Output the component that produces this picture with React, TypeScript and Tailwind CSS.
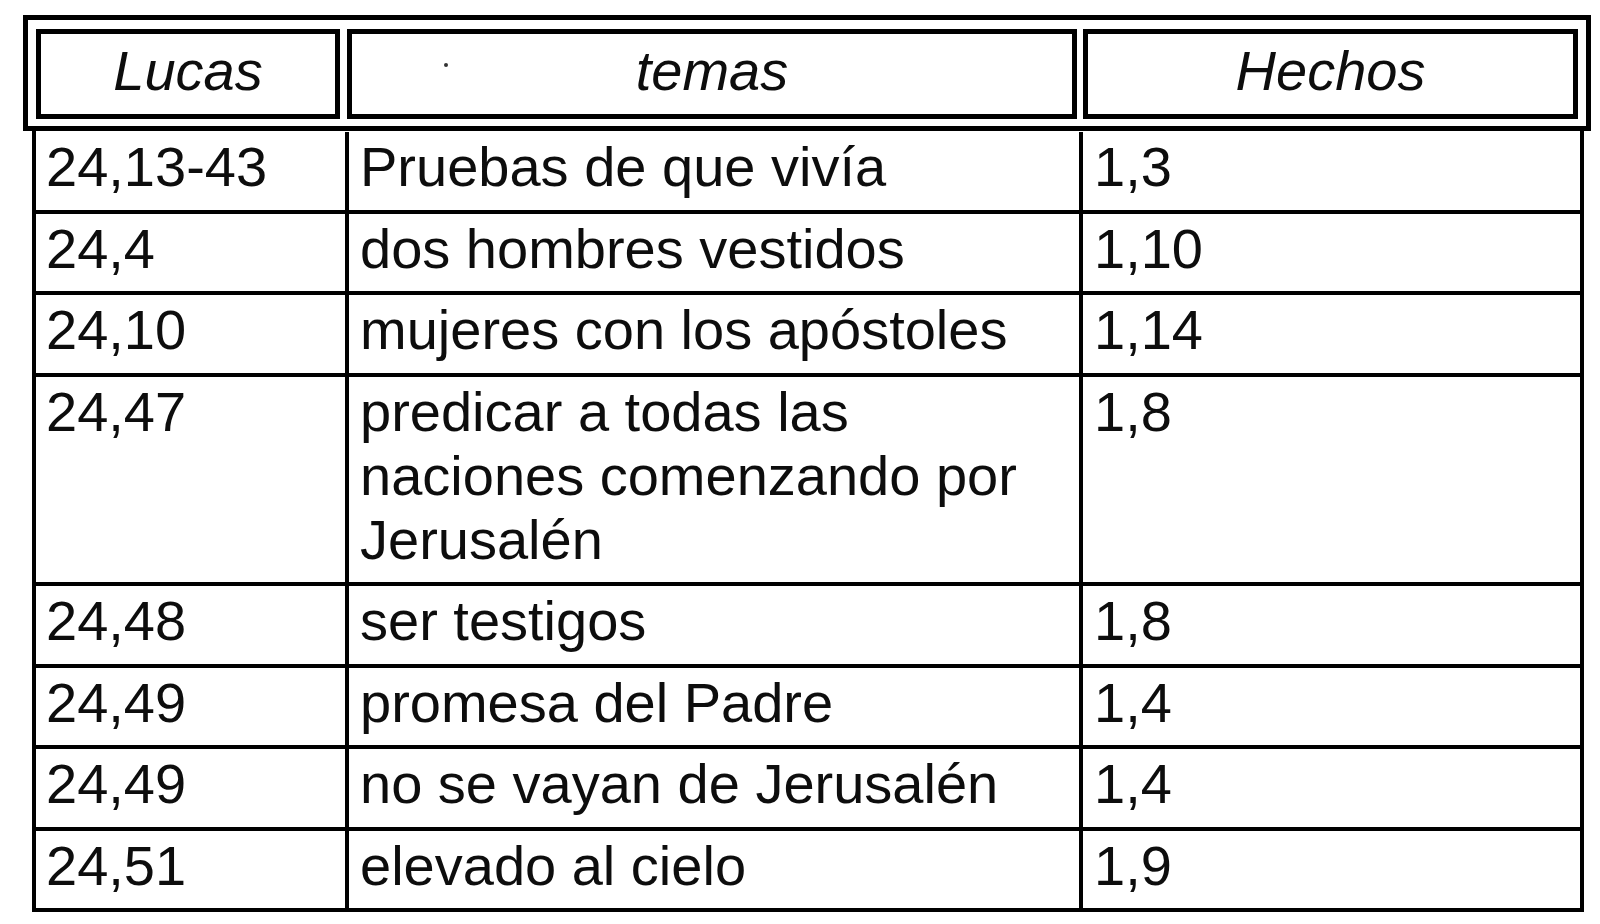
const font = "font-['Liberation_Sans',Arial,sans-serif]";

/** 본문 행 데이터 */
const rows: { lucas: string; tema: React.ReactNode; hechos: string }[] = [
  { lucas: "24,13-43", tema: "Pruebas de que vivía", hechos: "1,3" },
  { lucas: "24,4", tema: "dos hombres vestidos", hechos: "1,10" },
  { lucas: "24,10", tema: "mujeres con los apóstoles", hechos: "1,14" },
  {
    lucas: "24,47",
    tema: (
      <>
        predicar a todas las
        <br />
        naciones comenzando por
        <br />
        Jerusalén
      </>
    ),
    hechos: "1,8",
  },
  { lucas: "24,48", tema: "ser testigos", hechos: "1,8" },
  { lucas: "24,49", tema: "promesa del Padre", hechos: "1,4" },
  { lucas: "24,49", tema: "no se vayan de Jerusalén", hechos: "1,4" },
  { lucas: "24,51", tema: "elevado al cielo", hechos: "1,9" },
];

/** 머리글 셀 */
function HeadCell({ label, className }: { label: string; className: string }) {
  return (
    <div
      className={`relative flex h-[90px] items-center justify-center border-[5px] border-black pb-[6px] text-[56px] italic leading-none ${className}`}
    >
      {label}
    </div>
  );
}

export default function App() {
  return (
    <div className={`h-[924px] w-[1600px] overflow-hidden bg-white text-[#0d0d0d] ${font}`}>
      {/* 머리글 (이중 테두리) */}
      <div className="ml-[23px] mt-[15px] flex h-[116px] w-[1568px] border-[5px] border-black pl-[8px] pr-[8px] pt-[9px]">
        <HeadCell label="Lucas" className="w-[304px]" />
        <div className="relative ml-[7px] w-[730px]">
          <HeadCell label="temas" className="w-[730px]" />
          {/* 작은 점 */}
          <span className="absolute left-[97px] top-[34px] h-[4px] w-[4px] rounded-full bg-[#333]" />
        </div>
        <HeadCell label="Hechos" className="ml-[6px] flex-1" />
      </div>

      {/* 본문 */}
      <div className="ml-[32px] w-[1552px] border-x-4 border-black">
        {rows.map((r, i) => (
          <div
            key={i}
            className={`flex border-b-4 border-black text-[56px] leading-[64px] ${i === 0 ? "pt-[1px]" : ""}`}
          >
            <div className="w-[313px] border-r-4 border-black pb-[10.5px] pl-[10px] pt-[3px]">{r.lucas}</div>
            <div className="w-[734px] border-r-4 border-black pb-[10.5px] pl-[11px] pt-[3px]">{r.tema}</div>
            <div className="flex-1 pb-[10.5px] pl-[11px] pt-[3px]">{r.hechos}</div>
          </div>
        ))}
      </div>
    </div>
  );
}
